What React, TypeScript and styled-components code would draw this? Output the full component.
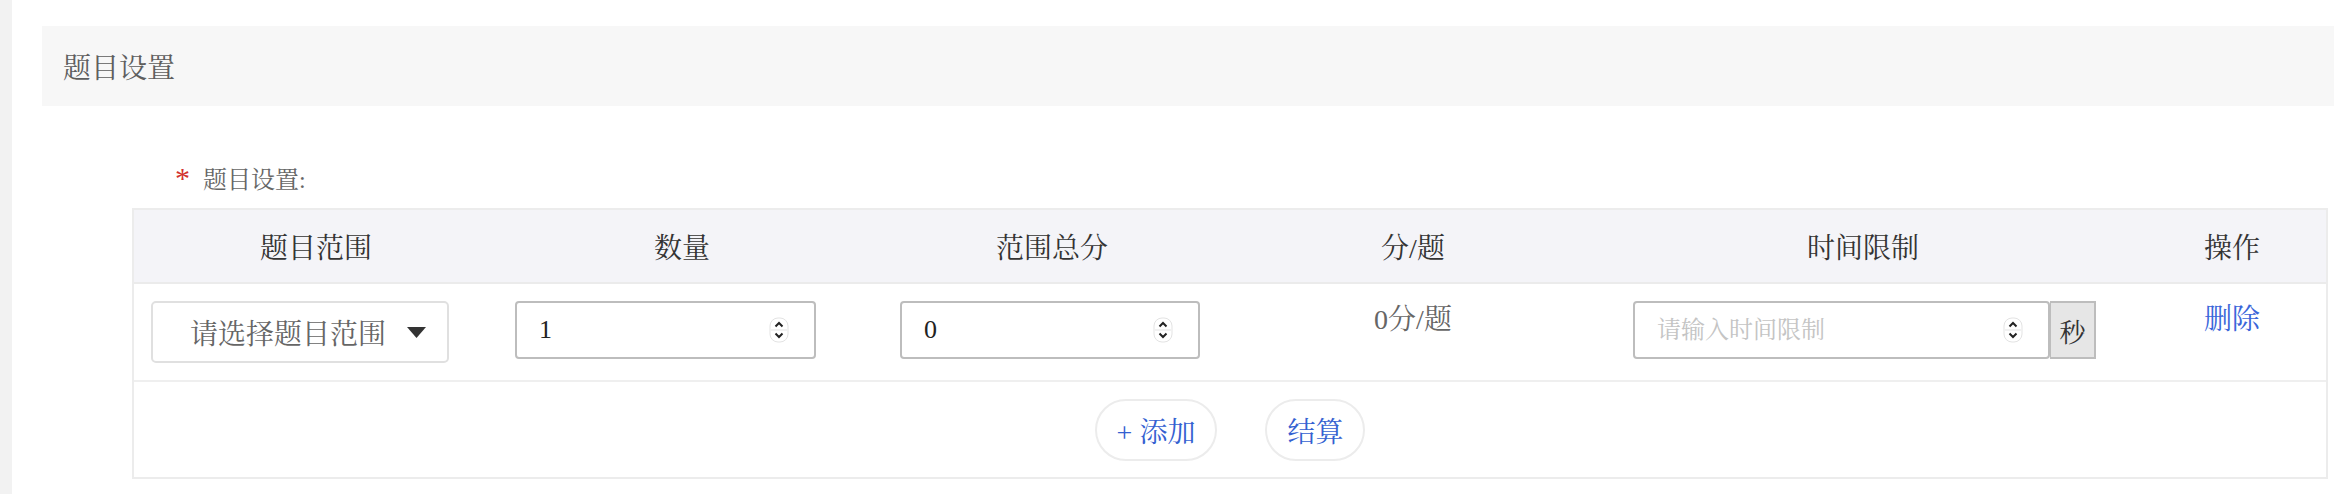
import React from 'react'
import styled, {createGlobalStyle} from 'styled-components'

const GlobalStyle = createGlobalStyle`
  html, body {
    margin: 0;
    padding: 0;
    background: #fff;
  }
  body {
    font-family: "Liberation Serif", "Noto Serif CJK SC", "Noto Sans CJK SC", serif;
  }
  * {
    box-sizing: border-box;
  }
`

const columns = '364px 368px 372px 350px 550px 1fr'

const Page = styled.div`
  display: flex;
  width: 2334px;
  height: 494px;
  overflow: hidden;
`

const SideStrip = styled.div`
  width: 12px;
  flex-shrink: 0;
  background: #f2f2f2;
`

const Main = styled.div`
  flex: 1;
  display: flex;
  flex-direction: column;
  padding: 26px 0 0 30px;
`

const SectionHeader = styled.div`
  height: 80px;
  display: flex;
  align-items: center;
  padding-left: 21px;
  background: #f7f7f7;
  color: #5e5e5e;
  font-size: 28px;
`

const FormBody = styled.div`
  padding: 53px 6px 0 90px;
`

const FieldLabel = styled.div`
  display: flex;
  align-items: center;
  gap: 13px;
  height: 36px;
  padding-left: 43px;
  color: #666;
  font-size: 24px;
`

const Required = styled.span`
  color: #d2322d;
  font-size: 30px;
  line-height: 1;
  position: relative;
  top: 1px;
`

const Table = styled.div`
  margin-top: 13px;
  border: 2px solid #ececec;
  display: flex;
  flex-direction: column;
`

const HeadRow = styled.div`
  display: grid;
  grid-template-columns: ${columns};
  height: 74px;
  background: #f4f4f8;
  border-bottom: 2px solid #ebebeb;
`

const HeadCell = styled.div`
  display: flex;
  align-items: center;
  justify-content: center;
  color: #333;
  font-size: 28px;
`

const DataRow = styled.div`
  display: grid;
  grid-template-columns: ${columns};
  height: 98px;
  border-bottom: 2px solid #efefef;
`

const Cell = styled.div<{$pad?: number; $center?: boolean}>`
  display: flex;
  align-items: flex-start;
  justify-content: ${p => (p.$center ? 'center' : 'flex-start')};
  padding-top: 17px;
  padding-left: ${p => p.$pad ?? 0}px;
`

const CellText = styled.span<{$link?: boolean}>`
  line-height: 38px;
  font-size: 28px;
  color: ${p => (p.$link ? '#3a66d9' : '#666')};
  cursor: ${p => (p.$link ? 'pointer' : 'default')};
`

const SelectBox = styled.div`
  width: 298px;
  height: 62px;
  display: flex;
  align-items: center;
  padding: 0 21px 0 37px;
  border: 2px solid #e0e0e0;
  border-radius: 5px;
  color: #666;
  font-size: 28px;
  cursor: pointer;
`

const SelectCaret = styled.svg`
  margin-left: auto;
  flex-shrink: 0;
`

const InputBox = styled.div<{$width: number}>`
  width: ${p => p.$width}px;
  height: 58px;
  display: flex;
  align-items: center;
  padding: 0 25px 0 22px;
  border: 2px solid #bdbdbd;
  border-radius: 4px;
  background: #fff;
`

const TextInput = styled.input`
  flex: 1;
  min-width: 0;
  border: none;
  outline: none;
  padding: 0;
  background: transparent;
  font-family: inherit;
  font-size: 26px;
  color: #222;

  &::placeholder {
    color: #c4c4c4;
    font-size: 24px;
  }
`

const InputGroup = styled.div`
  display: flex;
`

const Addon = styled.div`
  width: 46px;
  height: 58px;
  display: flex;
  align-items: center;
  justify-content: center;
  background: #e6e6e6;
  border: 2px solid #bdbdbd;
  border-left-width: 1px;
  color: #333;
  font-size: 26px;
`

const Footer = styled.div`
  height: 95px;
  display: flex;
  align-items: center;
  justify-content: center;
  gap: 48px;
`

const PillButton = styled.button`
  height: 62px;
  padding: 0 20px;
  border: 2px solid #ececec;
  border-radius: 31px;
  background: #fff;
  color: #3461d1;
  font-family: inherit;
  font-size: 28px;
  cursor: pointer;
`

const Spinner = () => (
    <svg width="20" height="26" viewBox="0 0 20 26">
        <rect x="1" y="1" width="18" height="24" rx="8" fill="#fff" stroke="#e3e3e3"/>
        <line x1="2" y1="13" x2="18" y2="13" stroke="#e3e3e3"/>
        <path d="M6.5 9.5 L10 6 L13.5 9.5" stroke="#222" strokeWidth="2" fill="none"/>
        <path d="M6.5 16.5 L10 20 L13.5 16.5" stroke="#222" strokeWidth="2" fill="none"/>
    </svg>
)

type NumberFieldProps = {
    width: number
    value?: string
    placeholder?: string
}

const NumberField = (props: NumberFieldProps) => (
    <InputBox $width={props.width}>
        <TextInput readOnly value={props.value ?? ''} placeholder={props.placeholder}/>
        <Spinner/>
    </InputBox>
)

const headers = ['题目范围', '数量', '范围总分', '分/题', '时间限制', '操作']

export default function App() {
    return (
        <Page>
            <GlobalStyle/>
            <SideStrip/>
            <Main>
                <SectionHeader>题目设置</SectionHeader>
                <FormBody>
                    <FieldLabel>
                        <Required>*</Required>
                        <span>题目设置:</span>
                    </FieldLabel>
                    <Table>
                        <HeadRow>
                            {headers.map(h => <HeadCell key={h}>{h}</HeadCell>)}
                        </HeadRow>
                        <DataRow>
                            <Cell $pad={17}>
                                <SelectBox>
                                    <span>请选择题目范围</span>
                                    <SelectCaret width="19" height="11" viewBox="0 0 19 11">
                                        <path d="M0 0 H19 L9.5 11 Z" fill="#333"/>
                                    </SelectCaret>
                                </SelectBox>
                            </Cell>
                            <Cell $pad={17}>
                                <NumberField width={301} value="1"/>
                            </Cell>
                            <Cell $pad={34}>
                                <NumberField width={300} value="0"/>
                            </Cell>
                            <Cell $center>
                                <CellText>0分/题</CellText>
                            </Cell>
                            <Cell $pad={45}>
                                <InputGroup>
                                    <NumberField width={417} placeholder="请输入时间限制"/>
                                    <Addon>秒</Addon>
                                </InputGroup>
                            </Cell>
                            <Cell $center>
                                <CellText $link>删除</CellText>
                            </Cell>
                        </DataRow>
                        <Footer>
                            <PillButton>+ 添加</PillButton>
                            <PillButton>结算</PillButton>
                        </Footer>
                    </Table>
                </FormBody>
            </Main>
        </Page>
    )
}
